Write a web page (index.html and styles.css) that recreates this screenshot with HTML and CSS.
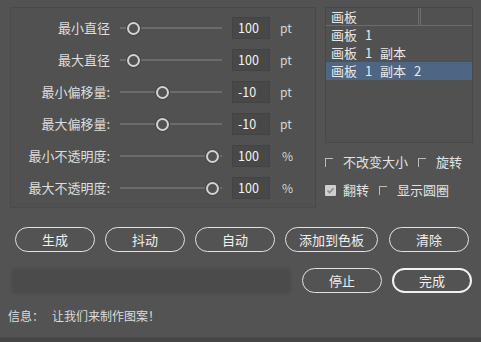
FILE: index.html
```html
<!DOCTYPE html>
<html lang="zh">
<head>
<meta charset="utf-8">
<title>图案</title>
<link rel="stylesheet" href="styles.css">
</head>
<body>
<div class="app">
  <div class="top">
    <div class="params">
      <div class="row">
        <span class="label">最小直径</span>
        <div class="slider"><div class="track"></div><div class="thumb" style="left:8.5px"></div></div>
        <div class="num">100</div>
        <span class="unit">pt</span>
      </div>
      <div class="row">
        <span class="label">最大直径</span>
        <div class="slider"><div class="track"></div><div class="thumb" style="left:8.5px"></div></div>
        <div class="num">100</div>
        <span class="unit">pt</span>
      </div>
      <div class="row">
        <span class="label">最小偏移量:</span>
        <div class="slider"><div class="track"></div><div class="thumb" style="left:37.5px"></div></div>
        <div class="num">-10</div>
        <span class="unit">pt</span>
      </div>
      <div class="row">
        <span class="label">最大偏移量:</span>
        <div class="slider"><div class="track"></div><div class="thumb" style="left:37.5px"></div></div>
        <div class="num">-10</div>
        <span class="unit">pt</span>
      </div>
      <div class="row">
        <span class="label">最小不透明度:</span>
        <div class="slider"><div class="track"></div><div class="thumb" style="left:87.5px"></div></div>
        <div class="num">100</div>
        <span class="unit pct">%</span>
      </div>
      <div class="row">
        <span class="label">最大不透明度:</span>
        <div class="slider"><div class="track"></div><div class="thumb" style="left:87.5px"></div></div>
        <div class="num">100</div>
        <span class="unit pct">%</span>
      </div>
    </div>
    <div class="side">
      <div class="list">
        <div class="list-head">
          <span class="head-cell">画板</span>
          <span class="head-rest"></span>
        </div>
        <div class="item">画板 1</div>
        <div class="item">画板 1 副本</div>
        <div class="item selected">画板 1 副本 2</div>
      </div>
      <div class="checks">
        <div class="check-row">
          <span class="check"><span class="cb off"></span>不改变大小</span>
          <span class="check"><span class="cb off"></span>旋转</span>
        </div>
        <div class="check-row">
          <span class="check"><span class="cb on"><svg width="11" height="11" viewBox="0 0 11 11"><path d="M2.5 5.5 L4.6 7.6 L8.6 3.2" fill="none" stroke="#8a8a8a" stroke-width="1.6"/></svg></span>翻转</span>
          <span class="check"><span class="cb off"></span>显示圆圈</span>
        </div>
      </div>
    </div>
  </div>
  <div class="buttons">
    <div class="btn">生成</div>
    <div class="btn">抖动</div>
    <div class="btn">自动</div>
    <div class="btn wide">添加到色板</div>
    <div class="btn">清除</div>
  </div>
  <div class="actions">
    <div class="progress"></div>
    <div class="btn">停止</div>
    <div class="btn primary">完成</div>
  </div>
  <div class="info"><span>信息：</span><span class="msg">让我们来制作图案！</span></div>
  <div class="bottom"></div>
</div>
</body>
</html>
```

FILE: styles.css
```css
* { box-sizing: border-box; }
html, body { margin: 0; padding: 0; }
body {
  width: 481px;
  height: 342px;
  overflow: hidden;
  background: #535353;
  font-family: "Noto Sans CJK SC", "Noto Sans", sans-serif;
  font-size: 13px;
  color: #e0e0e0;
}
.app { height: 342px; display: flex; flex-direction: column; }
.top { display: flex; padding: 7px 8px 0 10px; gap: 9px; }

.params {
  width: 306px;
  height: 201px;
  border: 1px solid #4a4a4a;
  background: #515151;
  padding-top: 4px;
}
.row { display: flex; align-items: center; height: 32px; }
.label {
  width: 99px;
  margin-right: 8px;
  text-align: right;
  line-height: 16px;
  white-space: nowrap;
  color: #dedede;
}
.slider { position: relative; width: 108px; height: 14px; }
.track {
  position: absolute;
  left: 2px; right: 4px; top: 6px;
  height: 2px;
  background: #6b6b6b;
}
.thumb {
  position: absolute;
  top: 0.5px;
  width: 13px; height: 13px;
  border-radius: 50%;
  border: 2px solid #d2d2d2;
  background: #525252;
  box-shadow: 0 0 0 1px #444;
}
.num {
  margin-left: 6px;
  width: 38px; height: 22px;
  background: #484848;
  border: 1px solid #434343;
  color: #f4f4f4;
  padding-left: 5px;
  font-size: 12.5px;
  line-height: 20px;
}
.unit { margin-left: 10px; font-size: 12px; color: #d6d6d6; line-height: 14px; }
.unit.pct { margin-left: 12px; }

.side { width: 148px; display: flex; flex-direction: column; }
.list {
  height: 136px;
  border: 1px solid #484848;
  background: #515151;
}
.list-head {
  display: flex;
  height: 18px;
  border-bottom: 1px solid #6c6c6c;
}
.head-cell {
  width: 95px;
  padding-left: 5px;
  line-height: 17px;
  border-right: 3px double #6e6e6e;
  color: #e6e6e6;
}
.head-rest { flex: 1; }
.item {
  height: 18px;
  line-height: 18px;
  padding-left: 5px;
  color: #e8e8e8;
  white-space: pre;
  word-spacing: 5px;
}
.item.selected { background: #4e6584; }

.checks { margin-top: 5px; }
.check-row { display: flex; align-items: center; height: 28px; gap: 10px; }
.check { display: flex; align-items: center; line-height: 16px; color: #e2e2e2; }
.cb { display: inline-block; }
.cb.off {
  width: 8px; height: 9px;
  margin-right: 10px;
  border-top: 1px solid #bcbcbc;
  border-left: 1px solid #bcbcbc;
}
.cb.on {
  width: 11px; height: 11px;
  margin-right: 7px;
  background: #cfcfcf;
  border-radius: 1px;
}
.cb.on svg { display: block; }

.buttons { display: flex; gap: 10px; padding-left: 15px; margin-top: 19px; }
.btn {
  width: 80px; height: 25px;
  border: 1.5px solid #e2e2e2;
  border-radius: 13px;
  display: flex; align-items: center; justify-content: center;
  color: #f0f0f0;
  font-size: 13px;
}
.btn.wide { width: 93px; margin-right: 1px; }
.actions { display: flex; align-items: center; padding-left: 12px; margin-top: 16px; }
.progress {
  width: 278px; height: 24px;
  margin-right: 12px;
  background: #4b4b4b;
  border-radius: 4px;
  box-shadow: 0 0 3px 1px #4e4e4e;
}
.actions .btn.primary { margin-left: 10px; border: 2px solid #f2f2f2; }
.info {
  margin-top: 15px;
  padding-left: 8px;
  font-size: 12px;
  line-height: 16px;
  color: #dcdcdc;
}
.info .msg { margin-left: 8px; }
.bottom {
  margin-top: auto;
  height: 5px;
  background: #464646;
  border-top: 1px solid #4c4c4c;
}
```
